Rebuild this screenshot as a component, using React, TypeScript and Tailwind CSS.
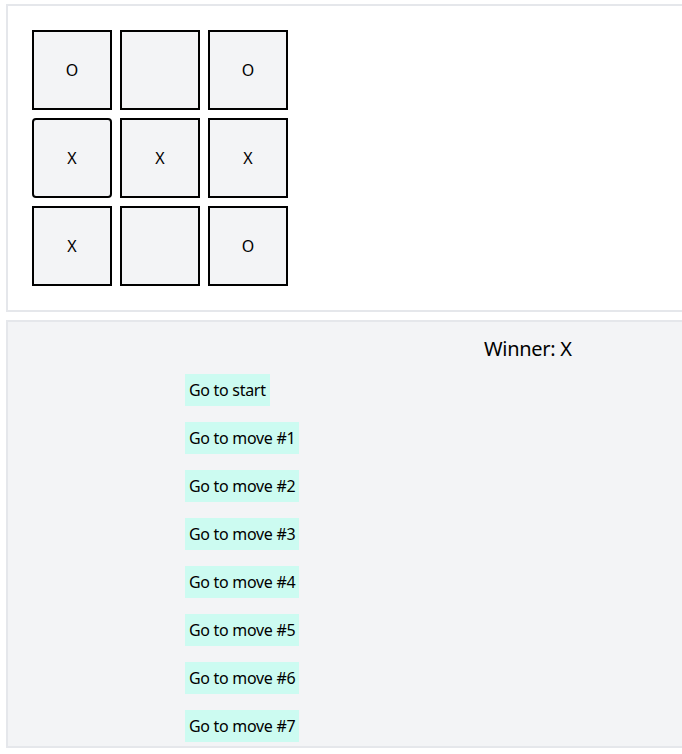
const board = ["O", "", "O", "X", "X", "X", "X", "", "O"];
const moves = ["Go to start", ...Array.from({ length: 7 }, (_, i) => `Go to move #${i + 1}`)];

export default function App() {
  return (
    <div className="min-h-[754px] overflow-hidden bg-white pl-[6px] pt-1 font-['Segoe_UI','Noto_Sans',sans-serif] text-black">
      {/* доска */}
      <div className="w-[720px] border-2 border-[#e5e7eb] bg-white p-6">
        <div className="grid w-max grid-cols-3 gap-2">
          {board.map((v, i) => (
            <button
              key={i}
              className={
                "flex h-20 w-20 items-center justify-center border-2 border-black bg-[#f3f4f6] text-base leading-none" +
                (i === 3 ? " rounded" : "")
              }
            >
              {v}
            </button>
          ))}
        </div>
      </div>

      {/* история */}
      <div className="mt-2 w-[720px] border-2 border-[#e5e7eb] bg-[#f3f4f6] pb-1 pt-[13px]">
        <div className="pl-[476px] text-xl leading-7 tracking-[-0.3px]">Winner: X</div>
        <ol className="mt-[11px] flex flex-col items-start gap-4 pl-[177px]">
          {moves.map((m) => (
            <li key={m}>
              <button className="bg-[#ccfbf1] px-1 py-1 text-base leading-6 tracking-[-0.3px]">{m}</button>
            </li>
          ))}
        </ol>
      </div>
    </div>
  );
}
